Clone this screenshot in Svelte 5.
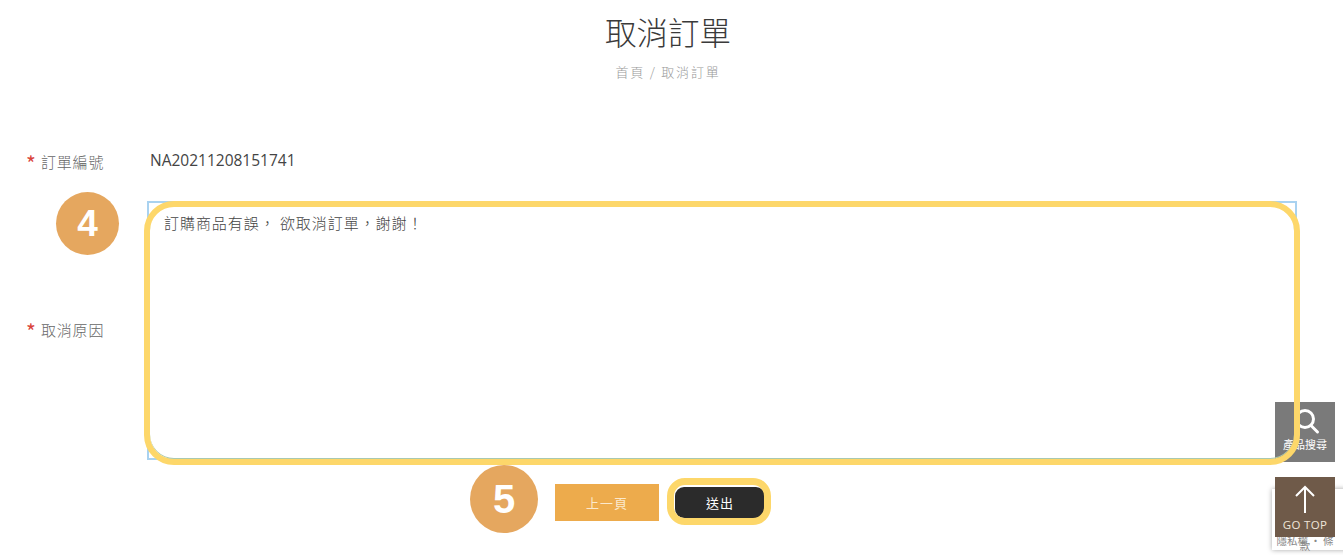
<script>
  const reason = '訂購商品有誤， 欲取消訂單，謝謝！';
</script>

<div class="page">
  <header class="head">
    <h1>取消訂單</h1>
    <nav class="crumb">首頁 / 取消訂單</nav>
  </header>

  <form class="form">
    <div class="row first">
      <div class="label"><span class="star">*</span>訂單編號</div>
      <div class="value">NA20211208151741</div>
    </div>
    <div class="row second">
      <div class="label"><span class="star">*</span>取消原因</div>
      <textarea class="reason" value={reason}></textarea>
    </div>
    <div class="actions">
      <button type="button" class="back">上一頁</button>
      <button type="button" class="send">送出</button>
    </div>
  </form>

  <div class="mark ring"></div>
  <div class="mark step four">4</div>
  <div class="mark step five">5</div>
  <div class="mark send-ring"></div>

  <div class="recaptcha">隱私權 · 條款</div>
  <div class="float search">
    <svg viewBox="0 0 30 30" width="30" height="30" fill="none" stroke="#fff" stroke-width="3">
      <circle cx="15" cy="12" r="8.500" />
      <path d="M21 18.500 L27.500 25" stroke-linecap="round" />
    </svg>
    <span>產品搜尋</span>
  </div>
  <div class="float top">
    <svg viewBox="0 0 30 32" width="30" height="32" fill="none" stroke="#fff" stroke-width="2">
      <path d="M15 29 V3 M6 12 L15 3 L24 12" />
    </svg>
    <span>GO TOP</span>
  </div>
</div>

<style>
  :global(body) {
    margin: 0;
    background: #fff;
  }
  .page {
    position: relative;
    height: 555px;
    overflow: hidden;
    font-family: "Open Sans", "Noto Sans CJK TC", sans-serif;
    color: #333;
  }
  .head {
    padding: 11px 7px 0 0;
    text-align: center;
  }
  h1 {
    margin: 0;
    font-family: "Noto Sans CJK TC", sans-serif;
    font-size: 31.500px;
    line-height: 40px;
    font-weight: 300;
    color: #3a3a3a;
  }
  .crumb {
    margin-top: 11px;
    font-family: "Noto Sans CJK TC", sans-serif;
    font-size: 13px;
    line-height: 20px;
    font-weight: 300;
    letter-spacing: 1.800px;
    color: #999;
  }
  .form {
    padding: 0 46px 0 26px;
  }
  .row {
    display: grid;
    grid-template-columns: 121px 1fr;
  }
  .first {
    margin-top: 67px;
    height: 52px;
  }
  .second {
    align-items: center;
    height: 259px;
  }
  .label {
    font-family: "Noto Sans CJK TC", sans-serif;
    font-size: 15px;
    line-height: 22px;
    font-weight: 300;
    letter-spacing: 0.800px;
    color: #666;
    white-space: nowrap;
  }
  .first .label {
    padding-top: 2px;
  }
  .second .label {
    padding-bottom: 2px;
  }
  .star {
    display: inline-block;
    width: 15px;
    font-size: 21px;
    font-weight: 400;
    line-height: 0;
    vertical-align: -4px;
    color: #d9433b;
  }
  .value {
    padding-left: 3px;
    font-size: 15.500px;
    line-height: 22px;
    color: #444;
  }
  .reason {
    display: block;
    box-sizing: border-box;
    width: 100%;
    height: 259px;
    padding: 10px 15px;
    border: 2px solid #a9d2f0;
    outline: none;
    resize: none;
    font-family: "Noto Sans CJK TC", sans-serif;
    font-size: 15px;
    line-height: 20px;
    font-weight: 300;
    letter-spacing: 0.950px;
    color: #444;
    background: #fff;
  }
  .actions {
    display: flex;
    align-items: center;
    gap: 16px;
    margin-top: 24px;
    padding-left: 529px;
  }
  button {
    border: 0;
    font-family: "Noto Sans CJK TC", sans-serif;
    font-size: 13px;
    letter-spacing: 1px;
    color: #fff;
    padding: 0;
  }
  .back {
    width: 104px;
    height: 37px;
    background: #edab4c;
    color: #fbe9cc;
  }
  .send {
    width: 90px;
    height: 31px;
    border-radius: 9px;
    background: #2b2b2b;
  }
  .mark {
    position: absolute;
  }
  .ring {
    left: 144px;
    top: 201px;
    width: 1156px;
    height: 264px;
    box-sizing: border-box;
    border: 6.500px solid #fdd76a;
    border-radius: 30px;
    box-shadow: inset 0 -1px 0 #a9c9b0;
    z-index: 5;
  }
  .send-ring {
    left: 667px;
    top: 478px;
    width: 104px;
    height: 47px;
    box-sizing: border-box;
    border: 7px solid #fdd76a;
    border-radius: 18px;
  }
  .step {
    display: flex;
    align-items: center;
    justify-content: center;
    border-radius: 50%;
    background: #e5a75f;
    color: #fff;
    font-family: "Liberation Sans", sans-serif;
    font-weight: 700;
  }
  .four {
    left: 56px;
    top: 192px;
    width: 63px;
    height: 63px;
    font-size: 37px;
  }
  .five {
    left: 470px;
    top: 465px;
    width: 68px;
    height: 68px;
    font-size: 40px;
  }
  .float {
    position: absolute;
    left: 1275px;
    width: 60px;
    height: 60px;
    display: flex;
    flex-direction: column;
    align-items: center;
    color: #fff;
    z-index: 3;
  }
  .search {
    top: 402px;
    background: #7a7a7a;
    font-family: "Noto Sans CJK TC", sans-serif;
    font-size: 11px;
    line-height: 14px;
    justify-content: flex-end;
  }
  .search span {
    margin-bottom: 11px;
  }
  .top {
    top: 477px;
    background: #6f5a49;
    font-size: 11.500px;
    line-height: 14px;
    color: #efe6da;
  }
  .top svg {
    margin-top: 7px;
  }
  .top span {
    margin-top: 2px;
    letter-spacing: 0.300px;
  }
  .recaptcha {
    position: absolute;
    left: 1272px;
    top: 489px;
    width: 66px;
    height: 61px;
    padding-right: 14px;
    background: #fff;
    box-shadow: 0 0 5px rgba(0, 0, 0, 0.35);
    font-family: "Noto Sans CJK TC", sans-serif;
    font-size: 10.500px;
    line-height: 5px;
    color: #888;
    text-align: center;
    z-index: 2;
  }
  .recaptcha::before {
    content: "";
    display: block;
    height: 49px;
  }
</style>
